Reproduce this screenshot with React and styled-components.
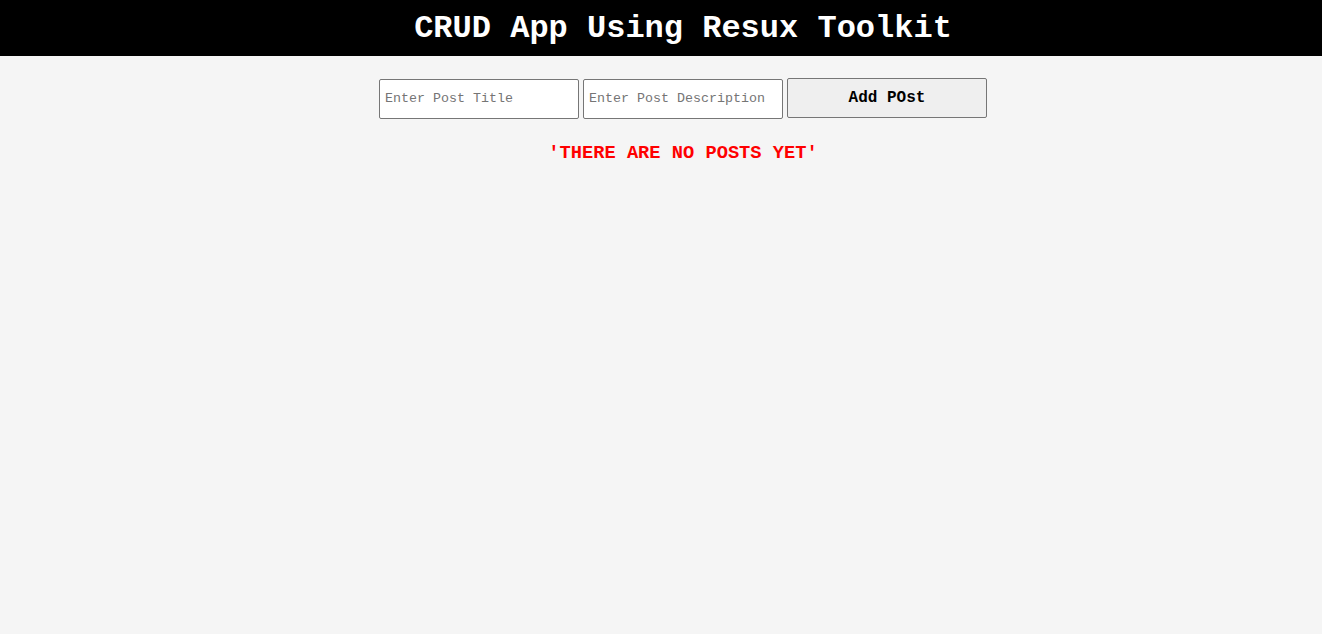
import React from "react";
import styled, { createGlobalStyle } from "styled-components";

const Global = createGlobalStyle`
  html, body { margin: 0; padding: 0; background: #f5f5f5; }
  body { font-family: "Liberation Mono", "Courier New", monospace; min-height: 634px; }
`;

const Page = styled.div`
  min-height: 634px;
  background: #f5f5f5;
`;

const Header = styled.header`
  height: 56px;
  background: #000;
  display: flex;
  align-items: center;
  justify-content: center;
  padding-left: 44px;
`;

const Title = styled.h1`
  margin: 0;
  color: #fff;
  font-family: "Liberation Mono", "Courier New", monospace;
  font-weight: bold;
  font-size: 32px;
  line-height: 1;
  position: relative;
  top: 1px;
`;

const Main = styled.main`
  display: flex;
  flex-direction: column;
  align-items: center;
  padding-left: 44px;
  padding-top: 22px;
`;

const Form = styled.form`
  display: flex;
  align-items: flex-start;
  gap: 4px;
`;

const Input = styled.input`
  box-sizing: border-box;
  width: 200px;
  height: 40px;
  margin-top: 1px;
  padding: 0 5px 2px;
  border: 1px solid #767676;
  border-radius: 2px;
  background: #fff;
  font-family: "Liberation Mono", "Courier New", monospace;
  font-size: 13.33px;
  &::placeholder { color: #757575; }
`;

const Button = styled.button`
  box-sizing: border-box;
  width: 200px;
  height: 40px;
  border: 1px solid #767676;
  border-radius: 2px;
  background: #efefef;
  color: #000;
  font-family: "Liberation Mono", "Courier New", monospace;
  font-weight: bold;
  font-size: 16px;
  cursor: pointer;
`;

const Empty = styled.h3`
  margin: 23px 0 0;
  color: #ff0000;
  font-family: "Liberation Mono", "Courier New", monospace;
  font-weight: bold;
  font-size: 18.72px;
  line-height: 22px;
`;

export default function App() {
  return (
    <Page>
      <Global />
      <Header>
        <Title>CRUD App Using Resux Toolkit</Title>
      </Header>
      <Main>
        <Form onSubmit={(e) => e.preventDefault()}>
          <Input placeholder="Enter Post Title" />
          <Input placeholder="Enter Post Description" />
          <Button type="submit">Add POst</Button>
        </Form>
        <Empty>'THERE ARE NO POSTS YET'</Empty>
      </Main>
    </Page>
  );
}
